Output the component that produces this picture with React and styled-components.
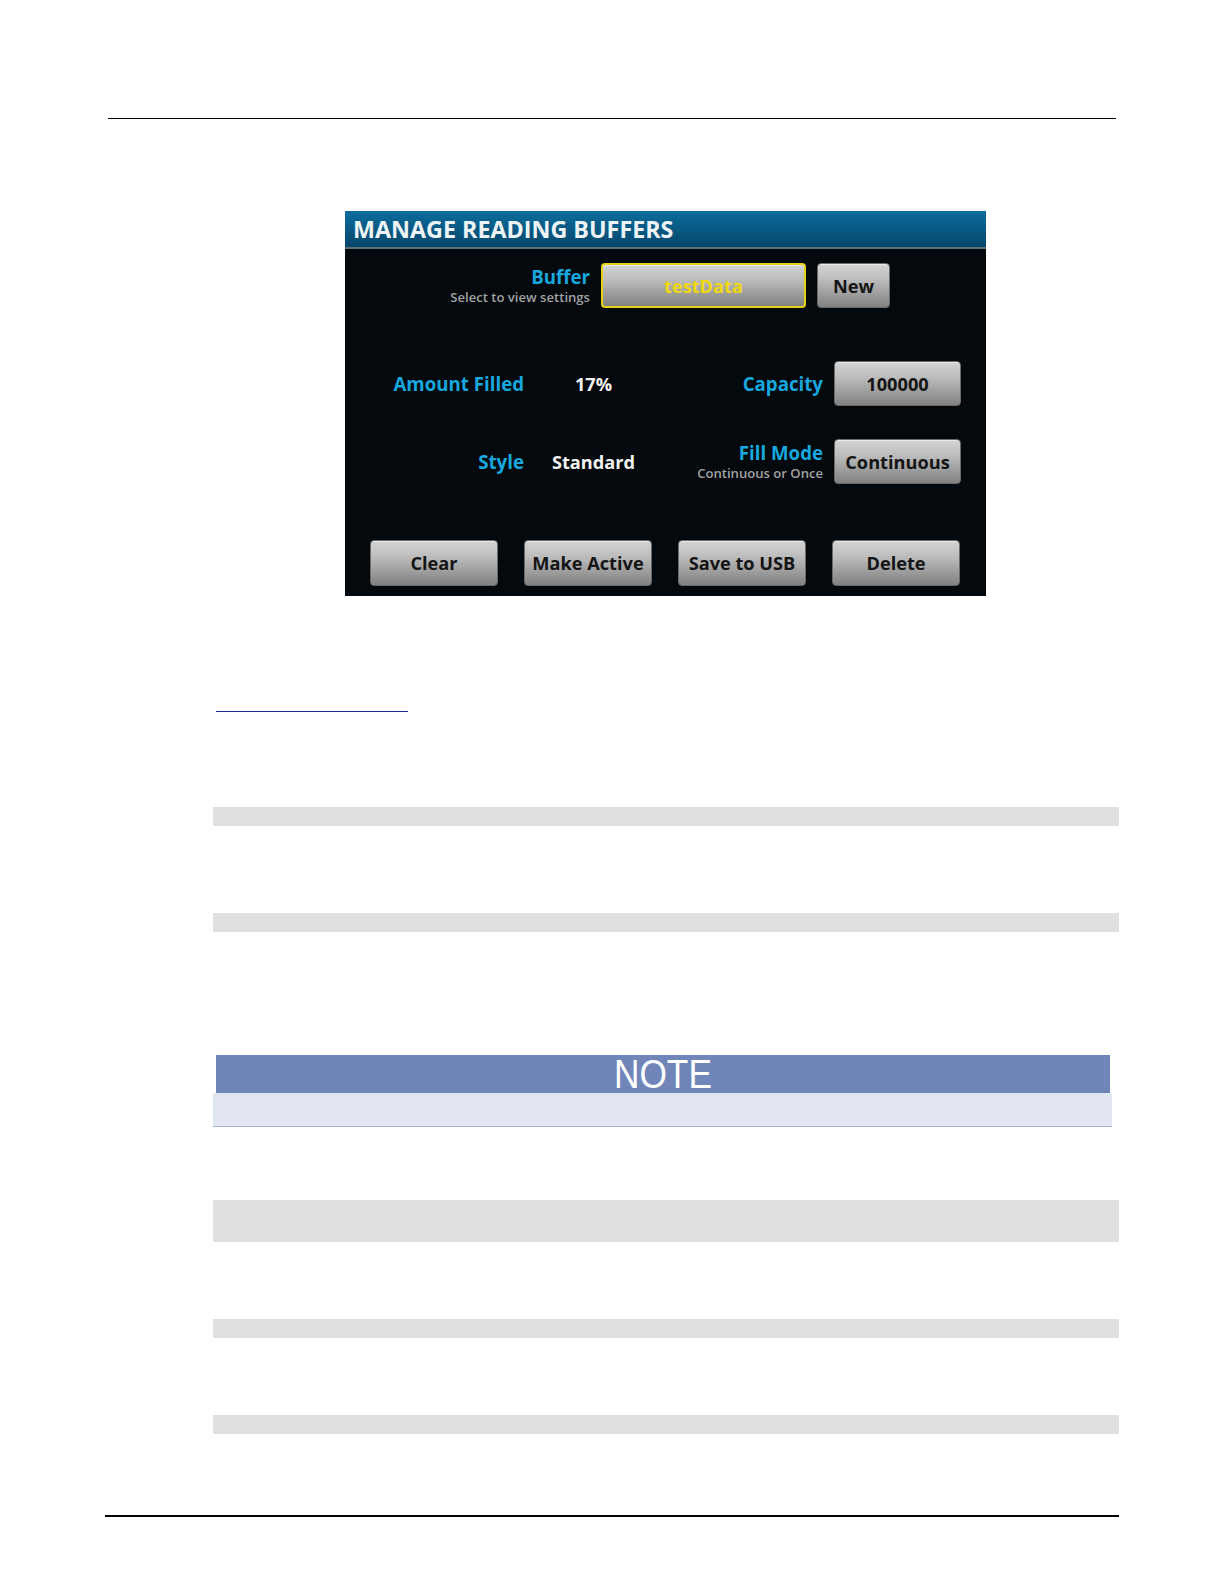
import React from "react";
import styled, { createGlobalStyle } from "styled-components";

const Global = createGlobalStyle`
  html, body { margin: 0; padding: 0; background: #ffffff; }
  body { font-family: "Liberation Sans", Arial, sans-serif; overflow: hidden; }
`;

const Page = styled.div`
  width: 100%;
  display: flex;
  flex-direction: column;
  align-items: flex-start;
`;

const Rule = styled.div`
  margin-top: ${(p) => p.$top}px;
  margin-left: ${(p) => p.$left}px;
  width: ${(p) => p.$width}px;
  height: ${(p) => p.$thick}px;
  background: #000;
`;

const Panel = styled.div`
  margin-top: 92px;
  margin-left: 345px;
  width: 641px;
  height: 385px;
  background: #03090c;
  display: flex;
  flex-direction: column;
  font-family: "Open Sans", "Noto Sans", sans-serif;
`;

const Header = styled.div`
  height: 36px;
  background: linear-gradient(#0c6d9c, #06466b);
  border-bottom: 2px solid #5d7078;
  display: flex;
  align-items: center;
  padding-left: 8px;
  color: #eef4f6;
  font-weight: 700;
  font-size: 23.3px;
`;

const BufferRow = styled.div`
  margin-top: 14px;
  display: grid;
  grid-template-columns: 245px 205px 73px;
  column-gap: 11px;
  height: 45px;
`;

const FieldRow = styled.div`
  margin-top: ${(p) => p.$top}px;
  display: grid;
  grid-template-columns: 179px 117px 160px 127px;
  column-gap: 11px;
  height: 45px;
  align-items: center;
`;

const LabelBlock = styled.div`
  display: flex;
  flex-direction: column;
  align-items: flex-end;
  justify-content: center;
  text-align: right;
`;

const Label = styled.span`
  color: #18a7df;
  font-weight: 700;
  font-size: 18.7px;
  line-height: 22px;
  white-space: nowrap;
`;

const SubLabel = styled.span`
  color: #a2a2a2;
  font-size: 13.1px;
  font-weight: 600;
  line-height: 18px;
  white-space: nowrap;
`;

const Value = styled.span`
  color: #f2f2f2;
  font-weight: 700;
  font-size: 18.2px;
  text-align: center;
  white-space: nowrap;
`;

const Button = styled.div`
  height: 45px;
  box-sizing: border-box;
  border-radius: 4px;
  background: linear-gradient(#d4d4d4 0%, #bdbdbd 35%, #818181 100%);
  border: ${(p) => (p.$selected ? "2px solid #e6d214" : "1px solid #6a6a6a")};
  box-shadow: inset 0 1px 0 rgba(255, 255, 255, 0.5);
  display: flex;
  align-items: center;
  justify-content: center;
  color: ${(p) => (p.$selected ? "#f0d810" : "#141414")};
  font-weight: 700;
  font-size: 18.2px;
  white-space: nowrap;
`;

const ActionRow = styled.div`
  margin-top: 56px;
  padding-left: 25px;
  display: flex;
  gap: 26px;
`;

const ActionButton = styled(Button)`
  width: 128px;
  height: 46px;
`;

const LinkLine = styled.div`
  margin-top: ${(p) => p.$top}px;
  margin-left: 216px;
  width: 192px;
  height: 1px;
  background: #1b2a9c;
`;

const Bar = styled.div`
  margin-top: ${(p) => p.$top}px;
  margin-left: 213px;
  width: 906px;
  height: ${(p) => p.$h}px;
  background: #e0e0e0;
`;

const Note = styled.div`
  margin-top: ${(p) => p.$top}px;
  margin-left: 213px;
  width: 899px;
  display: flex;
  flex-direction: column;
`;

const NoteHead = styled.div`
  margin-left: 3px;
  width: 894px;
  height: 38px;
  background: #7086b9;
  display: flex;
  align-items: center;
  justify-content: center;
`;

const NoteTitle = styled.span`
  display: inline-block;
  color: #ffffff;
  font-family: "Liberation Sans", Arial, sans-serif;
  font-size: 41px;
  line-height: 38px;
  transform: scaleX(0.86);
`;

const NoteBody = styled.div`
  height: 33px;
  background: #e1e6f1;
  border-bottom: 1px solid #a9b5cd;
`;

export default function App() {
  return (
    <>
      <Global />
      <Page>
        <Rule $top={118} $left={108} $width={1008} $thick={1} />
        <Panel>
          <Header>MANAGE READING BUFFERS</Header>
          <BufferRow>
            <LabelBlock>
              <Label>Buffer</Label>
              <SubLabel>Select to view settings</SubLabel>
            </LabelBlock>
            <Button $selected>testData</Button>
            <Button>New</Button>
          </BufferRow>
          <FieldRow $top={53}>
            <LabelBlock>
              <Label>Amount Filled</Label>
            </LabelBlock>
            <Value>17%</Value>
            <LabelBlock>
              <Label>Capacity</Label>
            </LabelBlock>
            <Button>100000</Button>
          </FieldRow>
          <FieldRow $top={33}>
            <LabelBlock>
              <Label>Style</Label>
            </LabelBlock>
            <Value>Standard</Value>
            <LabelBlock>
              <Label>Fill Mode</Label>
              <SubLabel>Continuous or Once</SubLabel>
            </LabelBlock>
            <Button>Continuous</Button>
          </FieldRow>
          <ActionRow>
            <ActionButton>Clear</ActionButton>
            <ActionButton>Make Active</ActionButton>
            <ActionButton>Save to USB</ActionButton>
            <ActionButton>Delete</ActionButton>
          </ActionRow>
        </Panel>
        <LinkLine $top={115} />
        <Bar $top={95} $h={19} />
        <Bar $top={87} $h={19} />
        <Note $top={123}>
          <NoteHead>
            <NoteTitle>NOTE</NoteTitle>
          </NoteHead>
          <NoteBody />
        </Note>
        <Bar $top={73} $h={42} />
        <Bar $top={77} $h={19} />
        <Bar $top={77} $h={19} />
        <Rule $top={81} $left={105} $width={1014} $thick={2} />
      </Page>
    </>
  );
}
